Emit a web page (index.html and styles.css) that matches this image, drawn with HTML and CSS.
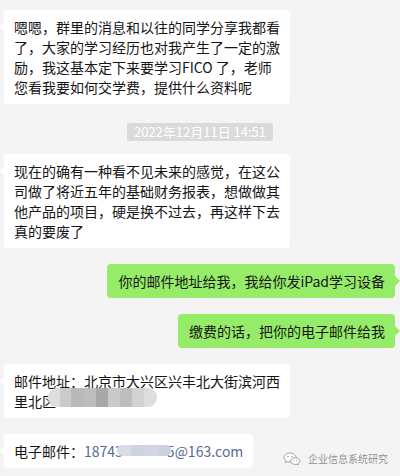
FILE: index.html
```html
<!DOCTYPE html>
<html lang="zh">
<head>
<meta charset="utf-8">
<link rel="stylesheet" href="styles.css">
</head>
<body>
<div class="page">
  <div class="chat">
    <div class="msg left"><div class="bubble">嗯嗯，群里的消息和以往的同学分享我都看了，大家的学习经历也对我产生了一定的激励，我这基本定下来要学习FICO 了，老师您看我要如何交学费，提供什么资料呢</div></div>
    <div class="time-row"><span class="time">2022年12月11日 14:51</span></div>
    <div class="msg left"><div class="bubble">现在的确有一种看不见未来的感觉，在这公司做了将近五年的基础财务报表，想做做其他产品的项目，硬是换不过去，再这样下去真的要废了</div></div>
    <div class="msg right"><div class="bubble">你的邮件地址给我，我给你发iPad学习设备</div></div>
    <div class="msg right"><div class="bubble">缴费的话，把你的电子邮件给我</div></div>
    <div class="msg left"><div class="bubble">邮件地址：北京市大兴区兴丰北大街滨河西里北区<span class="mosaic-addr"></span></div></div>
    <div class="msg left"><div class="bubble">电子邮件：<span class="link">18743<span class="mosaic-mail"></span>5@163.com</span></div></div>
  </div>
  <div class="watermark">
    <svg class="wm-icon" width="18" height="13" viewBox="0 0 18 13">
      <path d="M7 1 C3.4 1 1 3.1 1 5.6 C1 7 1.7 8.1 2.9 8.9 L2.4 10.6 L4.4 9.6 C5.2 9.9 6.1 10 7 10 C10.6 10 13 7.9 13 5.5 C13 3.1 10.6 1 7 1 Z" fill="#fff" stroke="#9c9c9c" stroke-width="1"/>
      <path d="M12.3 5.8 C9.6 5.8 7.6 7.4 7.6 9.2 C7.6 11 9.6 12.4 12.3 12.4 C12.9 12.4 13.4 12.3 13.9 12.2 L15.5 12.9 L15.1 11.6 C16.2 11 17 10.1 17 9.1 C17 7.4 14.9 5.8 12.3 5.8 Z" fill="#fff" stroke="#9c9c9c" stroke-width="1"/>
      <circle cx="5" cy="4.5" r="0.8" fill="#9c9c9c"/>
      <circle cx="8.8" cy="4.5" r="0.8" fill="#9c9c9c"/>
      <circle cx="10.8" cy="8.6" r="0.6" fill="#9c9c9c"/>
      <circle cx="13.8" cy="8.6" r="0.6" fill="#9c9c9c"/>
    </svg>
    <span class="wm-text">企业信息系统研究</span>
  </div>
</div>
</body>
</html>
```

FILE: styles.css
```css
html, body {
  margin: 0;
  padding: 0;
  background: #f4f4f4;
}

body {
  font-family: "Noto Sans CJK SC", "Noto Sans", sans-serif;
  color: #151515;
}

.page {
  position: relative;
  width: 400px;
  height: 476px;
  overflow: hidden;
}

.chat {
  display: flex;
  flex-direction: column;
  gap: 16px;
  padding-top: 10px;
}

.msg {
  display: flex;
}

.msg.left {
  justify-content: flex-start;
  padding-left: 4px;
}

.msg.right {
  justify-content: flex-end;
  padding-right: 5px;
}

.bubble {
  position: relative;
  box-sizing: border-box;
  max-width: 286px;
  padding: 7px 10px;
  font-size: 14px;
  line-height: 20px;
  background: #ffffff;
  border-radius: 4px;
  word-break: break-all;
}

.left .bubble::before {
  content: "";
  position: absolute;
  top: 12px;
  left: -4px;
  border-style: solid;
  border-width: 5px 4px 5px 0;
  border-color: transparent #ffffff transparent transparent;
}

.right .bubble {
  max-width: 300px;
  background: #95ec69;
  padding: 7px 10px 7px 11px;
}

.right .bubble::after {
  content: "";
  position: absolute;
  top: 12px;
  right: -5px;
  border-style: solid;
  border-width: 5px 0 5px 5px;
  border-color: transparent transparent transparent #95ec69;
}

.time-row {
  display: flex;
  justify-content: center;
  margin: 3px 0 -3px;
}

.time {
  display: inline-block;
  background: #dadada;
  color: #ffffff;
  font-size: 13px;
  line-height: 18px;
  padding: 0 7px;
  border-radius: 3px;
}

.mosaic-addr {
  display: inline-block;
  vertical-align: 1px;
  width: 109px;
  height: 19px;
  margin: -4px 0 -1px -8px;
  border-radius: 9px;
  background: linear-gradient(90deg,
    #dedede 0, #dedede 12px,
    #cbcbcb 12px, #cbcbcb 23px,
    #b9b9b9 23px, #b9b9b9 36px,
    #bebebe 36px, #bebebe 48px,
    #a9a7a9 48px, #a9a7a9 60px,
    #c9c9c9 60px, #c9c9c9 72px,
    #bfbebf 72px, #bfbebf 84px,
    #d2d2d2 84px, #d2d2d2 96px,
    #dedede 96px, #dedede 109px);
}

.link {
  color: #576b95;
}

.mosaic-mail {
  position: relative;
  z-index: 1;
  display: inline-block;
  vertical-align: 1px;
  width: 54px;
  height: 11px;
  margin: 0 -4px 0 -6px;
  border-radius: 5px;
  background: linear-gradient(90deg,
    #d9dbe6 0, #d9dbe6 14px,
    #cfd2df 14px, #cfd2df 28px,
    #d3d6e2 28px, #d3d6e2 42px,
    #cdd0de 42px, #cdd0de 54px);
}

.watermark {
  position: absolute;
  right: 12px;
  bottom: 11px;
  display: flex;
  align-items: center;
  gap: 7px;
}

.wm-icon {
  display: block;
}

.wm-text {
  font-size: 10px;
  line-height: 12px;
  color: #8f8f8f;
  text-shadow: 0 0 1px #ffffff, 0 0 1px #ffffff;
}
```
